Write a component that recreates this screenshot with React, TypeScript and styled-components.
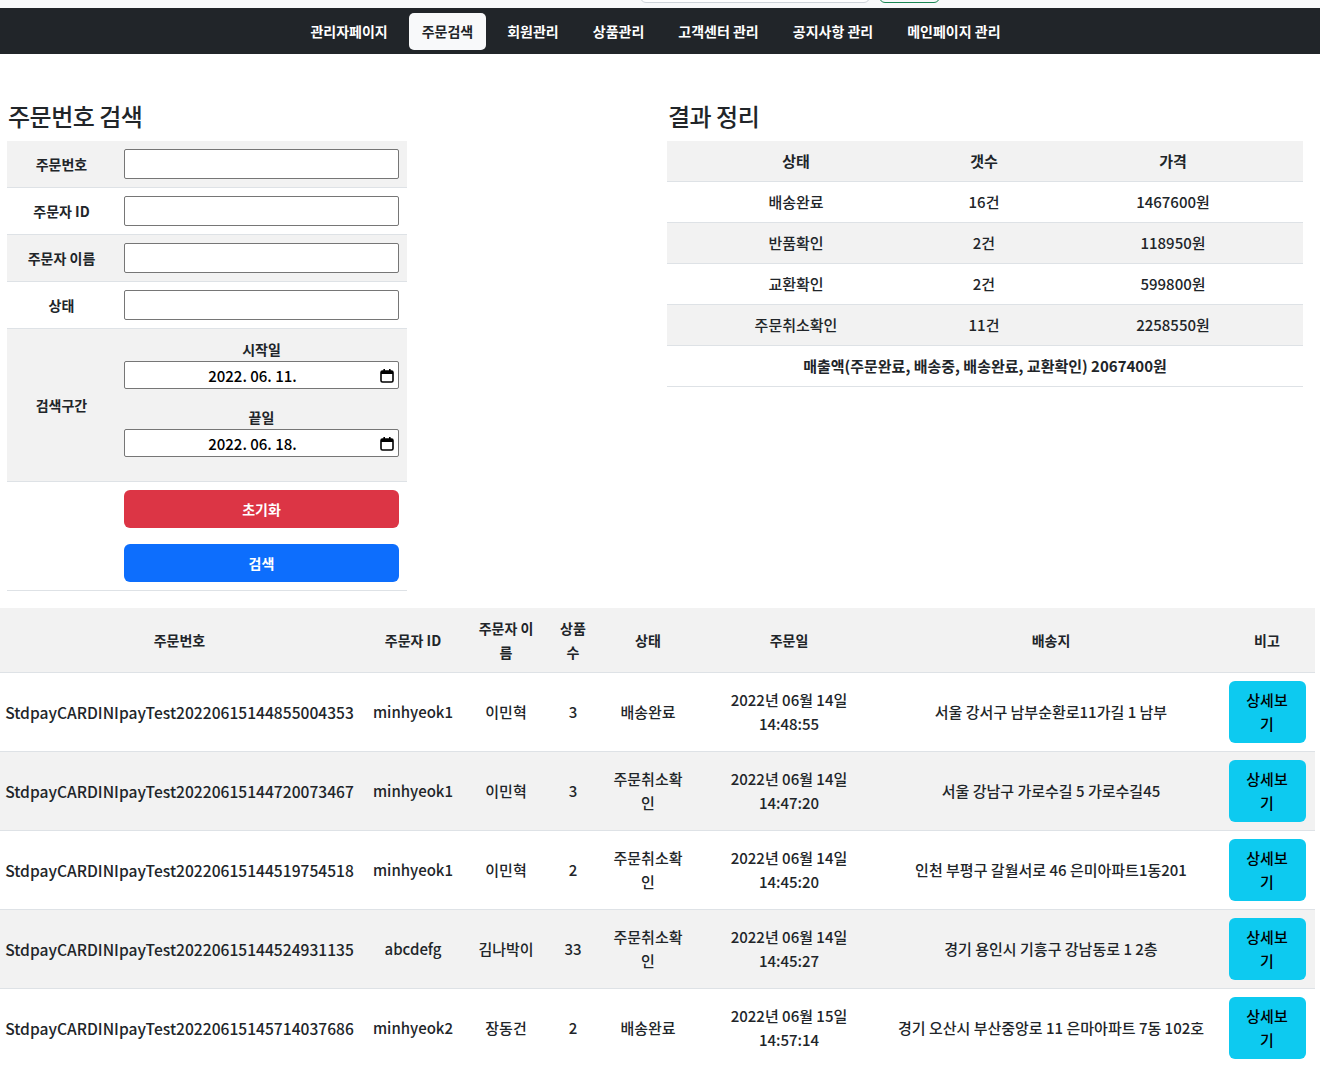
import React from 'react';
import styled, { createGlobalStyle, css } from 'styled-components';

const GlobalStyle = createGlobalStyle`
  html, body { margin: 0; padding: 0; background: #fff; }
  body {
    font-family: "Noto Sans CJK KR", "Noto Sans", sans-serif;
    color: #212529;
    font-size: 15px;
  }
  * { box-sizing: border-box; }
`;

const TopStrip = styled.div`
  height: 8px;
  background: #f8f9fa;
  overflow: hidden;
  display: flex;
  align-items: flex-end;
  gap: 9px;
  padding: 0 0 5px 640px;
`;

const StripInput = styled.div`
  flex: 0 0 230px;
  height: 38px;
  border: 1px solid #ced4da;
  border-radius: 6px;
  background: #fff;
`;

const StripButton = styled.div`
  flex: 0 0 61px;
  height: 38px;
  border: 1px solid #198754;
  border-radius: 6px;
`;

const Nav = styled.nav`
  height: 46px;
  background: #212529;
  display: flex;
  justify-content: center;
  align-items: center;
  gap: 8px;
  padding-right: 9px;
`;

const NavItem = styled.a<{ $active?: boolean }>`
  display: block;
  height: 37px;
  line-height: 37px;
  padding: 0 13px;
  border-radius: 5px;
  font-size: 14px;
  font-weight: 700;
  color: #fff;
  text-decoration: none;
  ${(p) =>
    p.$active &&
    css`
      background: #f8f9fa;
      color: #212529;
    `}
`;

const Main = styled.main`
  display: flex;
  justify-content: space-between;
  align-items: flex-start;
  padding: 47px 17px 0 7px;
`;

const Column = styled.section<{ $width: number }>`
  width: ${(p) => p.$width}px;
`;

const Title = styled.h2`
  margin: 0 0 11px 1px;
  font-size: 24px;
  line-height: 29px;
  font-weight: 500;
  letter-spacing: -0.5px;
  color: #212529;
`;

const Table = styled.table<{ $width: number }>`
  width: ${(p) => p.$width}px;
  border-collapse: collapse;
  table-layout: fixed;
`;

const Row = styled.tr<{ $striped?: boolean }>`
  background: ${(p) => (p.$striped ? '#f2f2f2' : '#fff')};
`;

const LabelCell = styled.th`
  width: 109px;
  padding: 8px;
  text-align: center;
  vertical-align: middle;
  font-size: 14px;
  font-weight: 700;
  border-bottom: 1px solid #dee2e6;
`;

const FieldCell = styled.td`
  padding: 8px;
  border-bottom: 1px solid #dee2e6;
`;

const TextInput = styled.input`
  display: block;
  width: 100%;
  height: 30px;
  border: 1px solid #767676;
  border-radius: 2px;
  background: #fff;
  padding: 1px 2px;
  font: inherit;
`;

const DateGroup = styled.div`
  margin-bottom: 16px;
`;

const DateLabel = styled.div`
  text-align: center;
  font-size: 14px;
  font-weight: 700;
  line-height: 24px;
`;

const DateBox = styled.div`
  display: flex;
  align-items: center;
  height: 28px;
  border: 1px solid #767676;
  border-radius: 2px;
  background: #fff;
  padding-right: 4px;
`;

const DateText = styled.span`
  flex: 1;
  text-align: center;
  font-size: 15px;
  font-weight: 500;
  color: #000;
`;

const ActionButton = styled.button<{ $color: string }>`
  display: block;
  width: 100%;
  height: 38px;
  border: none;
  border-radius: 6px;
  background: ${(p) => p.$color};
  color: #fff;
  font-family: inherit;
  font-size: 14px;
  font-weight: 700;
  & + & {
    margin-top: 16px;
  }
`;

const Cell = styled.td<{ $bold?: boolean; $size?: number; $nowrap?: boolean; $tight?: boolean }>`
  padding: ${(p) => (p.$tight ? '8px 3px' : '8px')};
  line-height: 24px;
  text-align: center;
  vertical-align: middle;
  border-bottom: 1px solid #dee2e6;
  font-size: ${(p) => p.$size ?? 15}px;
  font-weight: ${(p) => (p.$bold ? 700 : 500)};
  white-space: ${(p) => (p.$nowrap ? 'nowrap' : 'normal')};
`;

const HeadCell = styled.th`
  padding: 8px;
  line-height: 24px;
  text-align: center;
  vertical-align: middle;
  border-bottom: 1px solid #dee2e6;
  font-size: 14px;
  font-weight: 700;
`;

const OrdersTable = styled(Table)`
  margin-top: 17px;
`;

const TimeLine = styled.span`
  display: block;
`;

const DetailButton = styled.button`
  display: block;
  width: 77px;
  height: 62px;
  margin: 0 auto;
  padding: 7px 13px;
  border: none;
  border-radius: 6px;
  background: #0dcaf0;
  color: #000;
  font-family: inherit;
  font-size: 15px;
  font-weight: 500;
  line-height: 24px;
`;

const CalendarIcon = () => (
  <svg width="14" height="15" viewBox="0 0 14 15">
    <rect x="1" y="3" width="12" height="11" rx="1.5" fill="none" stroke="#000" strokeWidth="1.6" />
    <rect x="1" y="3" width="12" height="3" fill="#000" />
    <rect x="3.4" y="1" width="1.6" height="3" fill="#000" />
    <rect x="9" y="1" width="1.6" height="3" fill="#000" />
  </svg>
);

const navItems = ['관리자페이지', '주문검색', '회원관리', '상품관리', '고객센터 관리', '공지사항 관리', '메인페이지 관리'];

const summary = [
  ['배송완료', '16건', '1467600원'],
  ['반품확인', '2건', '118950원'],
  ['교환확인', '2건', '599800원'],
  ['주문취소확인', '11건', '2258550원'],
];

const orders = [
  ['StdpayCARDINIpayTest20220615144855004353', 'minhyeok1', '이민혁', '3', '배송완료', '2022년 06월 14일', '14:48:55', '서울 강서구 남부순환로11가길 1 남부'],
  ['StdpayCARDINIpayTest20220615144720073467', 'minhyeok1', '이민혁', '3', '주문취소확인', '2022년 06월 14일', '14:47:20', '서울 강남구 가로수길 5 가로수길45'],
  ['StdpayCARDINIpayTest20220615144519754518', 'minhyeok1', '이민혁', '2', '주문취소확인', '2022년 06월 14일', '14:45:20', '인천 부평구 갈월서로 46 은미아파트1동201'],
  ['StdpayCARDINIpayTest20220615144524931135', 'abcdefg', '김나박이', '33', '주문취소확인', '2022년 06월 14일', '14:45:27', '경기 용인시 기흥구 강남동로 1 2층'],
  ['StdpayCARDINIpayTest20220615145714037686', 'minhyeok2', '장동건', '2', '배송완료', '2022년 06월 15일', '14:57:14', '경기 오산시 부산중앙로 11 은마아파트 7동 102호'],
];

const orderCols = [359, 108, 78, 56, 94, 188, 336, 96];

export default function App() {
  return (
    <>
      <GlobalStyle />
      <TopStrip>
        <StripInput />
        <StripButton />
      </TopStrip>
      <Nav>
        {navItems.map((n) => (
          <NavItem key={n} $active={n === '주문검색'}>
            {n}
          </NavItem>
        ))}
      </Nav>
      <Main>
        <Column $width={400}>
          <Title>주문번호 검색</Title>
          <Table $width={400}>
            <tbody>
              {['주문번호', '주문자 ID', '주문자 이름', '상태'].map((l, i) => (
                <Row key={l} $striped={i % 2 === 0}>
                  <LabelCell>{l}</LabelCell>
                  <FieldCell>
                    <TextInput />
                  </FieldCell>
                </Row>
              ))}
              <Row $striped>
                <LabelCell>검색구간</LabelCell>
                <FieldCell>
                  <DateGroup>
                    <DateLabel>시작일</DateLabel>
                    <DateBox>
                      <DateText>2022. 06. 11.</DateText>
                      <CalendarIcon />
                    </DateBox>
                  </DateGroup>
                  <DateGroup>
                    <DateLabel>끝일</DateLabel>
                    <DateBox>
                      <DateText>2022. 06. 18.</DateText>
                      <CalendarIcon />
                    </DateBox>
                  </DateGroup>
                </FieldCell>
              </Row>
              <Row>
                <LabelCell />
                <FieldCell>
                  <ActionButton $color="#dc3545">초기화</ActionButton>
                  <ActionButton $color="#0d6efd">검색</ActionButton>
                </FieldCell>
              </Row>
            </tbody>
          </Table>
        </Column>
        <Column $width={636}>
          <Title>결과 정리</Title>
          <Table $width={636}>
            <colgroup>
              <col style={{ width: 258 }} />
              <col style={{ width: 118 }} />
              <col style={{ width: 260 }} />
            </colgroup>
            <tbody>
              <Row $striped>
                <Cell $bold>상태</Cell>
                <Cell $bold>갯수</Cell>
                <Cell $bold>가격</Cell>
              </Row>
              {summary.map((r, i) => (
                <Row key={r[0]} $striped={i % 2 === 1}>
                  {r.map((c) => (
                    <Cell key={c}>{c}</Cell>
                  ))}
                </Row>
              ))}
              <Row>
                <Cell $bold colSpan={3}>
                  매출액(주문완료, 배송중, 배송완료, 교환확인) 2067400원
                </Cell>
              </Row>
            </tbody>
          </Table>
        </Column>
      </Main>
      <OrdersTable $width={1315}>
        <colgroup>
          {orderCols.map((w, i) => (
            <col key={i} style={{ width: w }} />
          ))}
        </colgroup>
        <tbody>
          <Row $striped>
            {['주문번호', '주문자 ID', '주문자 이름', '상품 수', '상태', '주문일', '배송지', '비고'].map((h) => (
              <HeadCell key={h}>{h}</HeadCell>
            ))}
          </Row>
          {orders.map((o, i) => (
            <Row key={o[0]} $striped={i % 2 === 1}>
              <Cell $size={15.6} $nowrap $tight>{o[0]}</Cell>
              <Cell>{o[1]}</Cell>
              <Cell>{o[2]}</Cell>
              <Cell>{o[3]}</Cell>
              <Cell>{o[4]}</Cell>
              <Cell>
                <TimeLine>{o[5]}</TimeLine>
                <TimeLine>{o[6]}</TimeLine>
              </Cell>
              <Cell $nowrap>{o[7]}</Cell>
              <Cell>
                <DetailButton>상세보기</DetailButton>
              </Cell>
            </Row>
          ))}
        </tbody>
      </OrdersTable>
    </>
  );
}
